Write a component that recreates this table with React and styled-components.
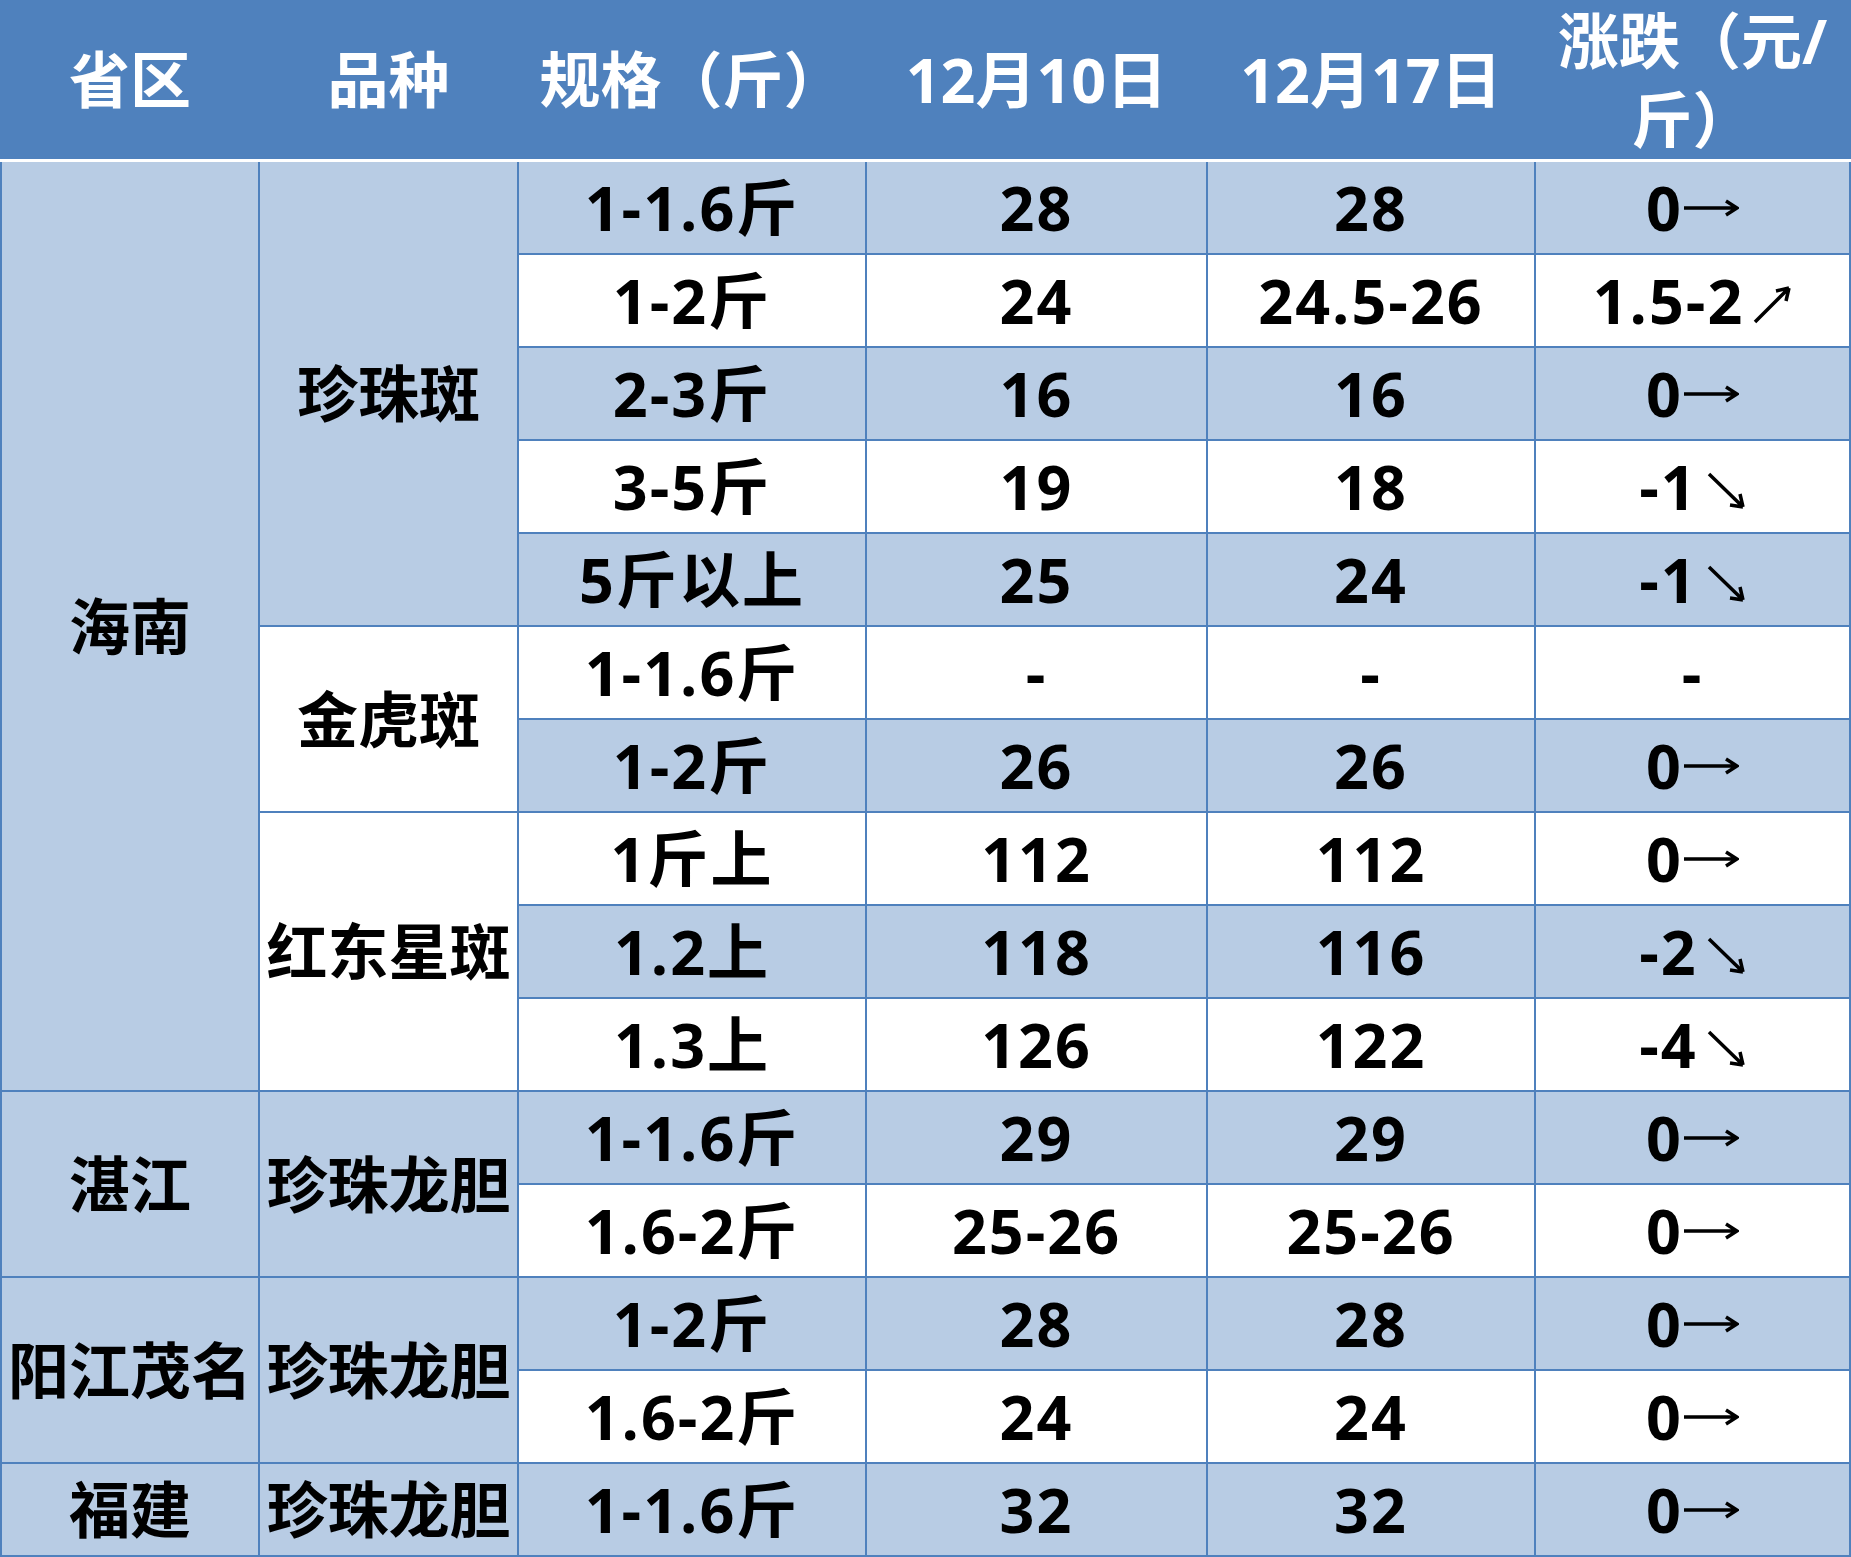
import React from 'react';
import styled, { createGlobalStyle } from 'styled-components';

const BLUE = '#4f81bd';
const LIGHT = '#b8cce4';
const COLS = '256px 257px 346px 339px 326px 313px';

const GlobalStyle = createGlobalStyle`
  html, body {
    margin: 0;
    padding: 0;
    background: #fff;
  }
  body {
    font-family: "Open Sans", "Noto Sans CJK SC", sans-serif;
  }
`;

const Sheet = styled.div`
  width: 1851px;
`;

const HeaderRow = styled.div`
  display: grid;
  grid-template-columns: ${COLS};
  column-gap: 2px;
  padding: 0 2px;
  height: 159px;
  background: ${BLUE};
  border-bottom: 3px solid #fff;
`;

const HeadCell = styled.div`
  display: flex;
  align-items: center;
  justify-content: center;
  text-align: center;
  color: #fff;
  font-weight: 700;
  font-size: 61px;
  line-height: ${p => p.$lh || '1'};
  white-space: nowrap;
`;

const Body = styled.div`
  display: grid;
  grid-template-columns: ${COLS};
  grid-auto-rows: 91px;
  gap: 2px;
  padding: 0 2px 2px;
  background: ${BLUE};
`;

const Cell = styled.div`
  grid-row: span ${p => p.$span || 1};
  background: ${p => (p.$shade ? LIGHT : '#fff')};
  display: flex;
  align-items: center;
  justify-content: center;
  color: #000;
  font-weight: 700;
  font-size: 61px;
  line-height: 1;
  letter-spacing: ${p => (p.$num ? '2px' : '0')};
  white-space: nowrap;
`;

const ArrowSvg = styled.svg`
  display: inline-block;
  vertical-align: ${p => (p.$dir === 'flat' ? '14px' : '0')};
  margin-left: ${p => (p.$dir === 'flat' ? '0' : '8px')};
`;

const Arrow = ({ dir }) => {
  if (dir === 'flat') {
    return (
      <ArrowSvg $dir={dir} width="56" height="18" viewBox="0 0 56 18">
        <path d="M1 9 H53 M43 2 L54 9 L43 16" fill="none" stroke="#000" strokeWidth="3.5" />
      </ArrowSvg>
    );
  }
  if (dir === 'up') {
    return (
      <ArrowSvg $dir={dir} width="40" height="39" viewBox="0 0 40 39">
        <path d="M3 37 L37 3 M37 3 L24 6 M37 3 L34 16" fill="none" stroke="#000" strokeWidth="3.5" />
      </ArrowSvg>
    );
  }
  return (
    <ArrowSvg $dir={dir} width="40" height="39" viewBox="0 0 40 39">
      <path d="M3 3 L37 36 M37 36 L34 23 M37 36 L24 34" fill="none" stroke="#000" strokeWidth="3.5" />
    </ArrowSvg>
  );
};

const ChangeText = styled.span`
  display: inline-block;
`;

const rows = [
  { spec: '1-1.6斤', a: '28', b: '28', c: '0', dir: 'flat' },
  { spec: '1-2斤', a: '24', b: '24.5-26', c: '1.5-2', dir: 'up' },
  { spec: '2-3斤', a: '16', b: '16', c: '0', dir: 'flat' },
  { spec: '3-5斤', a: '19', b: '18', c: '-1', dir: 'down' },
  { spec: '5斤以上', a: '25', b: '24', c: '-1', dir: 'down' },
  { spec: '1-1.6斤', a: '-', b: '-', c: '-' },
  { spec: '1-2斤', a: '26', b: '26', c: '0', dir: 'flat' },
  { spec: '1斤上', a: '112', b: '112', c: '0', dir: 'flat' },
  { spec: '1.2上', a: '118', b: '116', c: '-2', dir: 'down' },
  { spec: '1.3上', a: '126', b: '122', c: '-4', dir: 'down' },
  { spec: '1-1.6斤', a: '29', b: '29', c: '0', dir: 'flat' },
  { spec: '1.6-2斤', a: '25-26', b: '25-26', c: '0', dir: 'flat' },
  { spec: '1-2斤', a: '28', b: '28', c: '0', dir: 'flat' },
  { spec: '1.6-2斤', a: '24', b: '24', c: '0', dir: 'flat' },
  { spec: '1-1.6斤', a: '32', b: '32', c: '0', dir: 'flat' },
];

// merged cells that start on a given row index
const provinces = {
  0: { name: '海南', span: 10, shade: true },
  10: { name: '湛江', span: 2, shade: true },
  12: { name: '阳江茂名', span: 2, shade: true },
  14: { name: '福建', span: 1, shade: true },
};

const kinds = {
  0: { name: '珍珠斑', span: 5, shade: true },
  5: { name: '金虎斑', span: 2, shade: false },
  7: { name: '红东星斑', span: 3, shade: false },
  10: { name: '珍珠龙胆', span: 2, shade: true },
  12: { name: '珍珠龙胆', span: 2, shade: true },
  14: { name: '珍珠龙胆', span: 1, shade: true },
};

const App = () => {
  return (
    <>
      <GlobalStyle />
      <Sheet>
        <HeaderRow>
          <HeadCell>省区</HeadCell>
          <HeadCell>品种</HeadCell>
          <HeadCell>规格（斤）</HeadCell>
          <HeadCell>12月10日</HeadCell>
          <HeadCell>12月17日</HeadCell>
          <HeadCell $lh="79px">
            涨跌（元/
            <br />
            斤）
          </HeadCell>
        </HeaderRow>
        <Body>
          {rows.map((r, i) => {
            const shade = i % 2 === 0;
            const prov = provinces[i];
            const kind = kinds[i];
            return (
              <React.Fragment key={i}>
                {prov && (
                  <Cell $span={prov.span} $shade={prov.shade}>
                    {prov.name}
                  </Cell>
                )}
                {kind && (
                  <Cell $span={kind.span} $shade={kind.shade}>
                    {kind.name}
                  </Cell>
                )}
                <Cell $num $shade={shade}>{r.spec}</Cell>
                <Cell $num $shade={shade}>{r.a}</Cell>
                <Cell $num $shade={shade}>{r.b}</Cell>
                <Cell $num $shade={shade}>
                  <span>
                    <ChangeText>{r.c}</ChangeText>
                    {r.dir && <Arrow dir={r.dir} />}
                  </span>
                </Cell>
              </React.Fragment>
            );
          })}
        </Body>
      </Sheet>
    </>
  );
};

export default App;
